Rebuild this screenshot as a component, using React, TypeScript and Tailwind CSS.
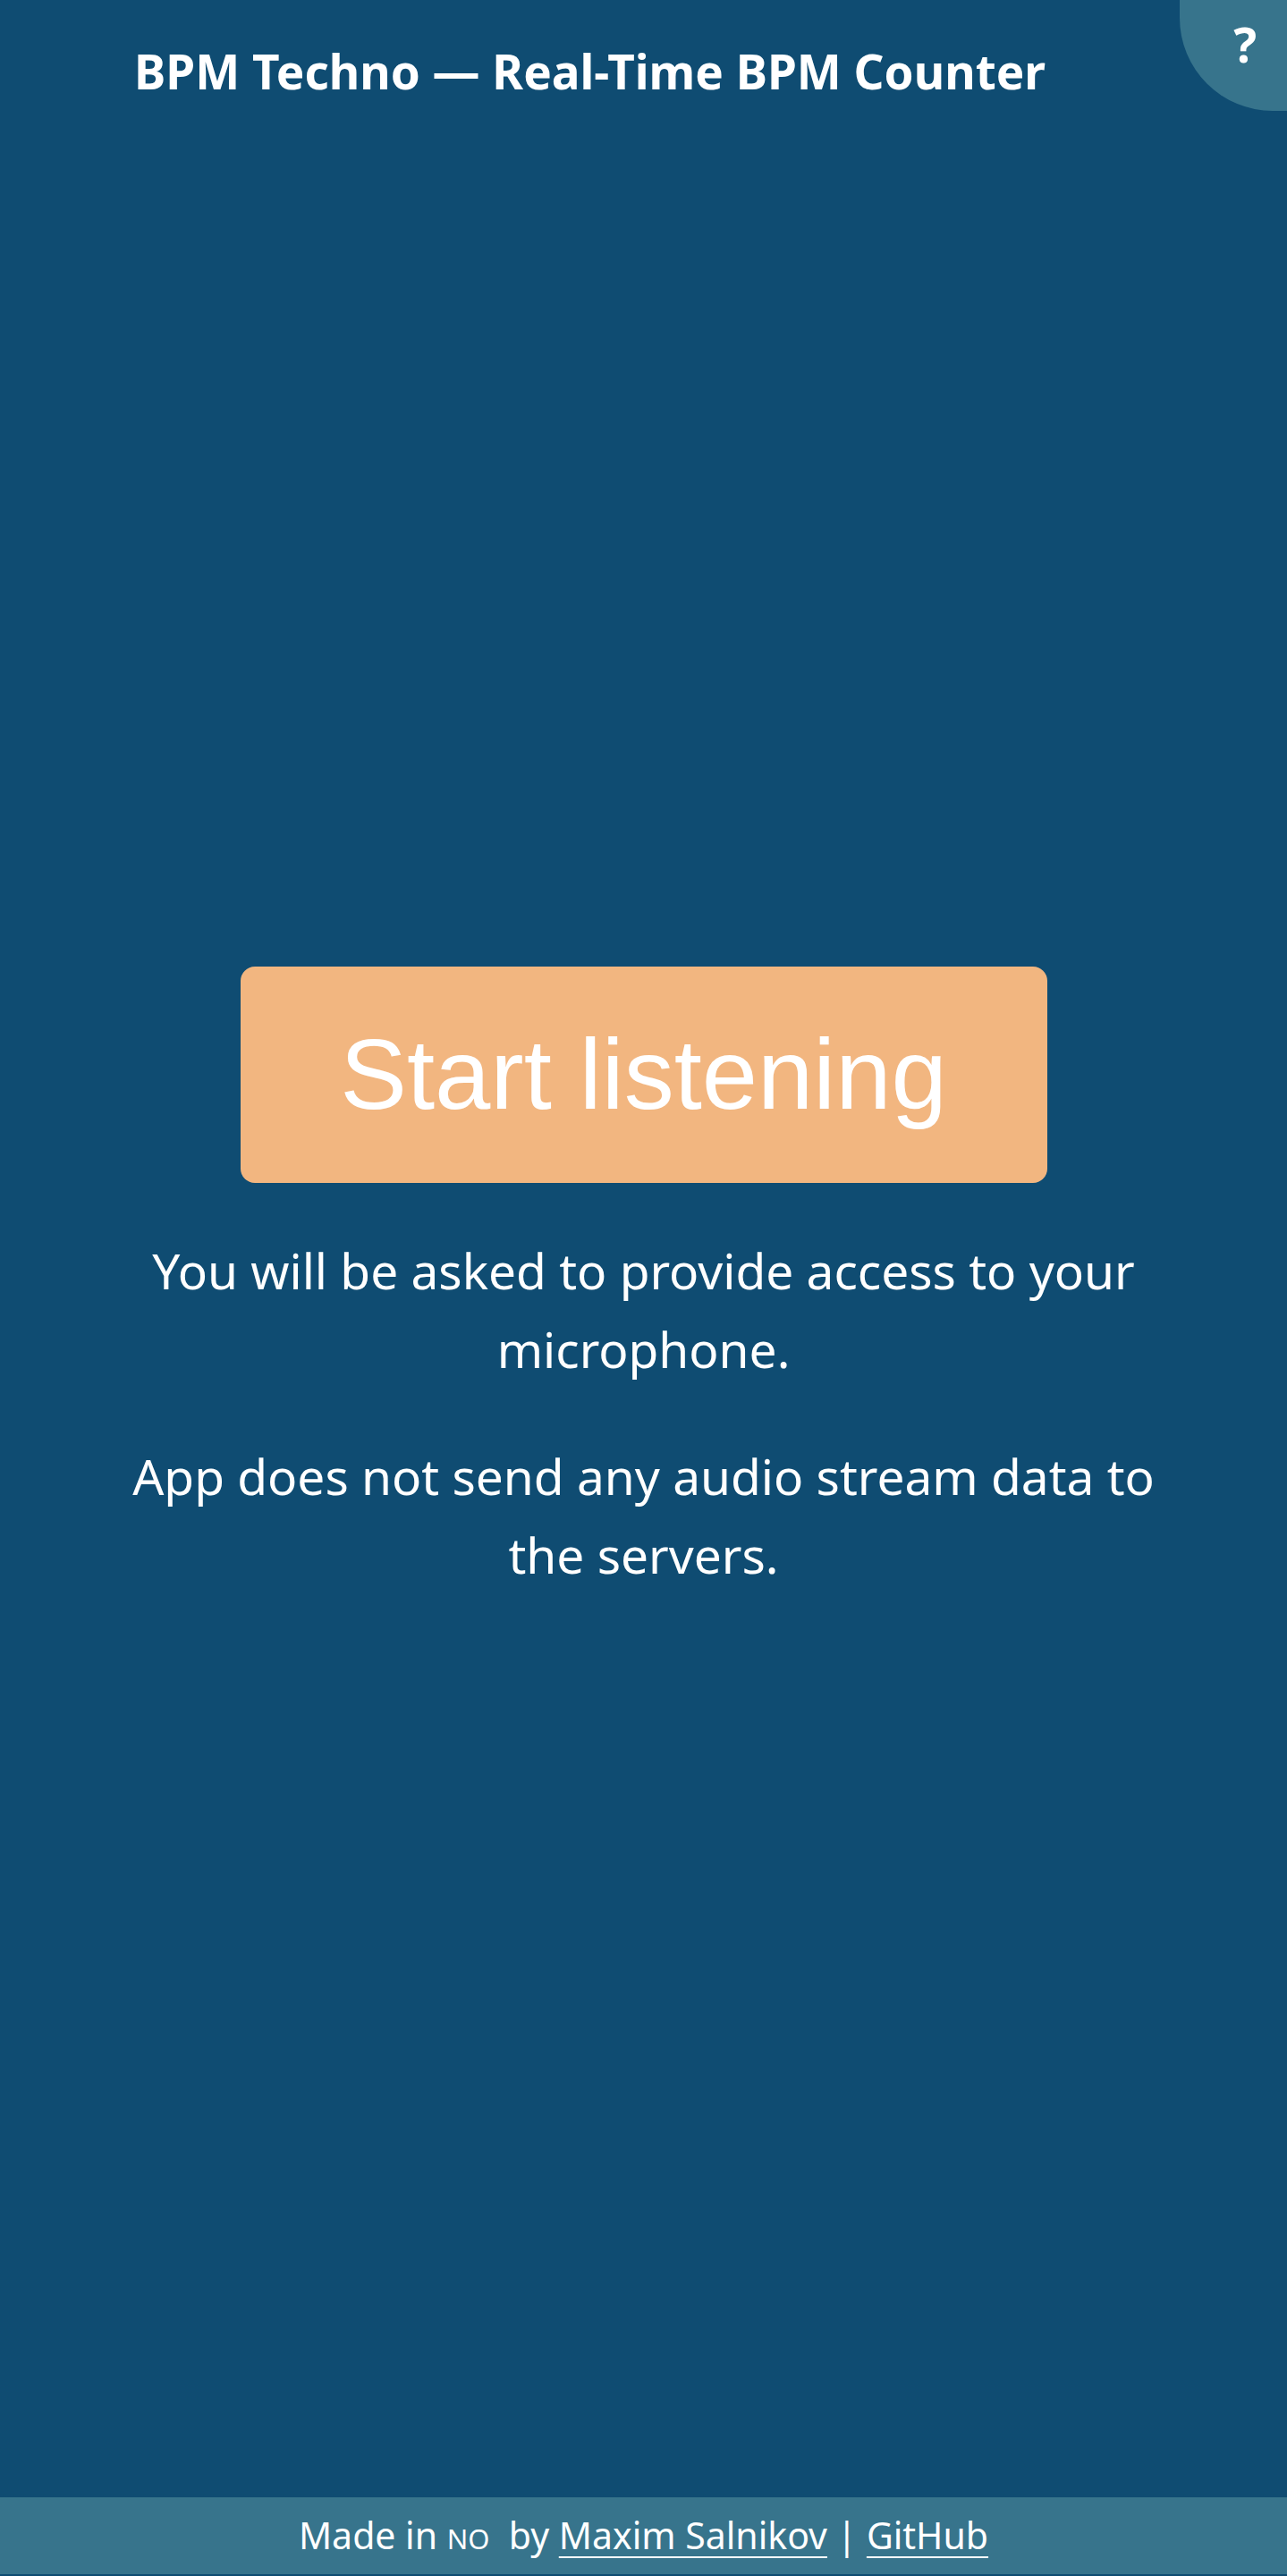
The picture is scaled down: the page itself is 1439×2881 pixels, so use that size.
const App = () => {
  return (
    <div className="min-h-screen flex flex-col bg-[#0f4c72] text-white font-['Noto_Sans',sans-serif]">
      {/* header */}
      <header className="flex items-start">
        <h1 className="flex-1 text-center pt-[53px] text-[53px] leading-none font-bold">
          BPM Techno — Real-Time BPM Counter
        </h1>
        <button className="w-[120px] h-[124px] shrink-0 rounded-bl-[104px] bg-[#37748c] flex justify-end pr-[34px] pt-[22px] text-[54px] leading-none font-bold">
          ?
        </button>
      </header>

      {/* main */}
      <main className="flex-1 flex flex-col items-center justify-center">
        <button className="w-[902px] h-[242px] rounded-[16px] bg-[#f2b680] text-white text-[112px] font-['Liberation_Sans',Arial,sans-serif]">
          Start listening
        </button>
        <div className="w-[1190px] text-center text-[55px] leading-[88px]">
          <p className="my-[54px]">You will be asked to provide access to your microphone.</p>
          <p className="my-[54px]">App does not send any audio stream data to the servers.</p>
        </div>
      </main>

      {/* footer */}
      <footer className="h-[86px] mb-[2px] bg-[#37748c] flex items-center justify-center text-[41px]">
        <span>
          Made in <span className="text-[31px]">NO</span>&nbsp; by{' '}
          <a href="#" className="underline underline-offset-[8px] decoration-2">Maxim Salnikov</a> |{' '}
          <a href="#" className="underline underline-offset-[8px] decoration-2">GitHub</a>
        </span>
      </footer>
    </div>
  );
};

export default App;
